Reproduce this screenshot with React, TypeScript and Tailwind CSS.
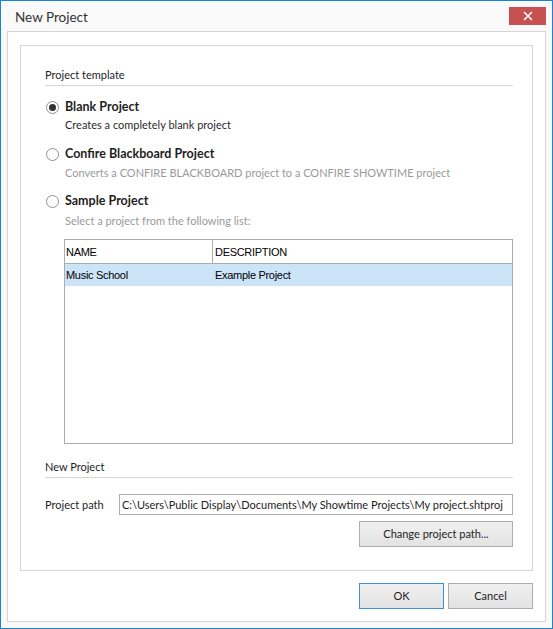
import React from "react";

function Radio({ checked }: { checked?: boolean }) {
	return (
		<span className="flex h-[13px] w-[13px] shrink-0 items-center justify-center rounded-full border border-[#8f8f8f] bg-white">
			{checked && <span className="h-[7px] w-[7px] rounded-full bg-[#333333]" />}
		</span>
	);
}

function Option({
	title,
	desc,
	checked,
	disabled,
	className,
	descGap,
}: {
	title: string;
	desc: string;
	checked?: boolean;
	disabled?: boolean;
	className?: string;
	descGap: string;
}) {
	return (
		<div className={className}>
			<div className="flex h-[16px] items-center gap-[6px] pl-[1px]">
				<Radio checked={checked} />
				<span className="text-[12.5px] font-bold text-[#1e1e1e]">{title}</span>
			</div>
			<div
				className={
					"pl-[20px] leading-[16px] " +
					descGap +
					" " +
					(disabled ? "text-[#9a9a9a]" : "text-[#2b2b2b]")
				}
			>
				{desc}
			</div>
		</div>
	);
}

const btn =
	"flex h-[26px] items-center justify-center border bg-linear-to-b from-[#f0f0f0] to-[#e3e3e3] text-[#1e1e1e]";

export default function App() {
	return (
		<div
			className="flex h-[629px] w-[553px] flex-col border border-[#1883d7] bg-[#f9f9f9] text-[11px] leading-[16px]"
			style={{ fontFamily: 'Lato, "Noto Sans", sans-serif' }}
		>
			<div className="flex h-[30px] items-start justify-between">
				<span className="pl-[14px] pt-[6px] text-[13.5px] leading-[20px] text-[#333333]">
					New Project
				</span>
				<button className="mr-[6px] mt-[6px] flex h-[18px] w-[37px] items-center justify-center bg-[#c75050]">
					<svg width="10" height="10" viewBox="0 0 10 10">
						<path d="M1 1 L9 9 M9 1 L1 9" stroke="white" strokeWidth="1.6" />
					</svg>
				</button>
			</div>

			<div className="flex min-w-0 flex-1 px-[6px] pb-[6px]">
				<div className="flex min-w-0 flex-1 flex-col border border-[#d5d5d5] bg-white px-[12px] pt-[13px]">
					<div className="flex min-w-0 flex-1 flex-col border border-[#d5d5d5] pl-[24px] pr-[19px] pt-[21px]">
						<div className="h-[16px] text-[#1e1e1e]">Project template</div>
						<div className="mt-[2px] border-t border-[#d5d5d5]" />

						<Option
							className="mt-[13px]"
							descGap="mt-[2px]"
							checked
							title="Blank Project"
							desc="Creates a completely blank project"
						/>
						<Option
							className="mt-[13px]"
							descGap="mt-[3px]"
							disabled
							title="Confire Blackboard Project"
							desc="Converts a CONFIRE BLACKBOARD project to a CONFIRE SHOWTIME project"
						/>
						<Option
							className="mt-[12px]"
							descGap="mt-[4px]"
							disabled
							title="Sample Project"
							desc="Select a project from the following list:"
						/>

						<div
							className="ml-[19px] mt-[10px] h-[205px] border border-[#acacac] text-[11px] text-black"
							style={{ fontFamily: '"Liberation Sans", Arial, sans-serif' }}
						>
							<div className="flex h-[24px] items-center border-b border-[#acacac]">
								<div className="flex h-full w-[148px] items-center border-r border-[#acacac] pl-[1px] tracking-[-0.3px]">
									NAME
								</div>
								<div className="pl-[2px] tracking-[-0.3px]">DESCRIPTION</div>
							</div>
							<div className="flex h-[22px] items-center bg-[#cce4f7]">
								<div className="w-[149px] pl-[1px] tracking-[-0.3px]">Music School</div>
								<div className="pl-[1px] tracking-[-0.3px]">Example Project</div>
							</div>
						</div>

						<div className="mt-[15px] h-[16px] text-[#1e1e1e]">New Project</div>
						<div className="mt-[2px] border-t border-[#d5d5d5]" />

						<div className="mt-[16px] flex h-[21px] min-w-0 items-center">
							<span className="w-[74px] shrink-0 text-[#1e1e1e]">Project path</span>
							<div className="flex h-full min-w-0 flex-1 items-center overflow-hidden whitespace-nowrap border border-[#abadb3] pl-[2px] text-[#1e1e1e]">
								C:\Users\Public Display\Documents\My Showtime Projects\My project.shtproj
							</div>
						</div>
						<div className="mt-[6px] flex justify-end">
							<button className={btn + " w-[154px] border-[#adadad]"}>Change project path...</button>
						</div>
					</div>

					<div className="flex justify-end gap-[4px] pb-[12px] pt-[12px]">
						<button className={btn + " w-[85px] border-[#3c8fe0]"}>OK</button>
						<button className={btn + " w-[85px] border-[#adadad]"}>Cancel</button>
					</div>
				</div>
			</div>
		</div>
	);
}
